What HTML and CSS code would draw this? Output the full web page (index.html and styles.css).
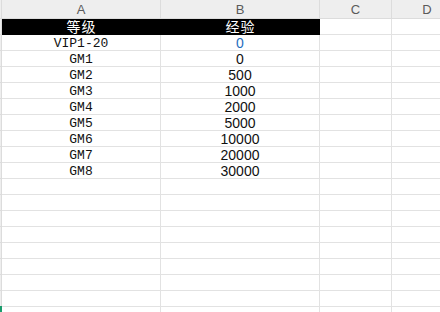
FILE: index.html
```html
<!DOCTYPE html>
<html>
<head>
<meta charset="utf-8">
<link rel="stylesheet" href="styles.css">
</head>
<body>
<div class="sheet">
  <div class="row head">
    <div class="rh"></div>
    <div class="c ca">A</div>
    <div class="c cb">B</div>
    <div class="c cc">C</div>
    <div class="c cd">D</div>
  </div>
  <div class="row">
    <div class="rh"></div>
    <div class="c ca dark zh">等级</div>
    <div class="c cb dark zh">经验</div>
    <div class="c cc"></div>
    <div class="c cd"></div>
  </div>
  <div class="row"><div class="rh"></div><div class="c ca mono">VIP1-20</div><div class="c cb num blue">0</div><div class="c cc"></div><div class="c cd"></div></div>
  <div class="row"><div class="rh"></div><div class="c ca mono">GM1</div><div class="c cb num">0</div><div class="c cc"></div><div class="c cd"></div></div>
  <div class="row"><div class="rh"></div><div class="c ca mono">GM2</div><div class="c cb num">500</div><div class="c cc"></div><div class="c cd"></div></div>
  <div class="row"><div class="rh"></div><div class="c ca mono">GM3</div><div class="c cb num">1000</div><div class="c cc"></div><div class="c cd"></div></div>
  <div class="row"><div class="rh"></div><div class="c ca mono">GM4</div><div class="c cb num">2000</div><div class="c cc"></div><div class="c cd"></div></div>
  <div class="row"><div class="rh"></div><div class="c ca mono">GM5</div><div class="c cb num">5000</div><div class="c cc"></div><div class="c cd"></div></div>
  <div class="row"><div class="rh"></div><div class="c ca mono">GM6</div><div class="c cb num">10000</div><div class="c cc"></div><div class="c cd"></div></div>
  <div class="row"><div class="rh"></div><div class="c ca mono">GM7</div><div class="c cb num">20000</div><div class="c cc"></div><div class="c cd"></div></div>
  <div class="row"><div class="rh"></div><div class="c ca mono">GM8</div><div class="c cb num">30000</div><div class="c cc"></div><div class="c cd"></div></div>
  <div class="row"><div class="rh"></div><div class="c ca"></div><div class="c cb"></div><div class="c cc"></div><div class="c cd"></div></div>
  <div class="row"><div class="rh"></div><div class="c ca"></div><div class="c cb"></div><div class="c cc"></div><div class="c cd"></div></div>
  <div class="row"><div class="rh"></div><div class="c ca"></div><div class="c cb"></div><div class="c cc"></div><div class="c cd"></div></div>
  <div class="row"><div class="rh"></div><div class="c ca"></div><div class="c cb"></div><div class="c cc"></div><div class="c cd"></div></div>
  <div class="row"><div class="rh"></div><div class="c ca"></div><div class="c cb"></div><div class="c cc"></div><div class="c cd"></div></div>
  <div class="row"><div class="rh"></div><div class="c ca"></div><div class="c cb"></div><div class="c cc"></div><div class="c cd"></div></div>
  <div class="row"><div class="rh"></div><div class="c ca"></div><div class="c cb"></div><div class="c cc"></div><div class="c cd"></div></div>
  <div class="row"><div class="rh"></div><div class="c ca"></div><div class="c cb"></div><div class="c cc"></div><div class="c cd"></div></div>
  <div class="row"><div class="rh"></div><div class="c ca"></div><div class="c cb"></div><div class="c cc"></div><div class="c cd"></div></div>
  <div class="row"><div class="rh"></div><div class="c ca"></div><div class="c cb"></div><div class="c cc"></div><div class="c cd"></div></div>
  <div class="row"><div class="rh"></div><div class="c ca"></div><div class="c cb"></div><div class="c cc"></div><div class="c cd"></div></div>
  <div class="row"><div class="rh"></div><div class="c ca"></div><div class="c cb"></div><div class="c cc"></div><div class="c cd"></div></div>
  <div class="tab-mark"></div>
</div>
</body>
</html>
```

FILE: styles.css
```css
html, body {
  margin: 0;
  padding: 0;
  background: #ffffff;
  overflow: hidden;
}
.sheet {
  position: relative;
  width: 440px;
  height: 312px;
  overflow: hidden;
  font-family: "Liberation Sans", Arial, sans-serif;
}
.row {
  display: flex;
  height: 16px;
}
.row.head {
  height: 19px;
  background: #eeeeee;
}
.rh {
  flex: none;
  width: 1px;
  background: #eeeeee;
  border-right: 1px solid #dcdcdc;
  border-bottom: 1px solid #dcdcdc;
}
.c {
  flex: none;
  box-sizing: content-box;
  height: 15px;
  border-right: 1px solid #e2e2e2;
  border-bottom: 1px solid #e2e2e2;
  display: flex;
  align-items: center;
  justify-content: center;
  font-size: 14px;
  line-height: 14px;
  color: #000;
  white-space: nowrap;
}
.head .c, .head .rh {
  height: 18px;
  border-color: #dcdcdc;
}
.head .c {
  color: #5a5a5a;
  font-size: 13px;
  background: #eeeeee;
  padding-top: 1px;
  height: 17px;
}
.ca { width: 158px; }
.cb { width: 158px; }
.cc { width: 71px; }
.cd { width: 70px; }
.dark {
  background: #000000;
  border-color: #000000;
  color: #ffffff;
}
.zh {
  font-family: "Noto Sans CJK SC", "Noto Sans", sans-serif;
  font-size: 14px;
  line-height: 15px;
  letter-spacing: 1px;
  text-indent: 1px;
}
.mono {
  font-family: "Liberation Mono", "Courier New", monospace;
  font-size: 13px;
  line-height: 13px;
  padding-top: 1px;
  height: 14px;
  color: #111;
}
.num {
  font-size: 14px;
  line-height: 13px;
  padding-top: 1px;
  height: 14px;
  color: #111;
}
.blue { color: #1f6fc0; }
.tab-mark {
  position: absolute;
  left: 0;
  top: 306px;
  width: 2px;
  height: 6px;
  background: #1a9c6c;
}
```
